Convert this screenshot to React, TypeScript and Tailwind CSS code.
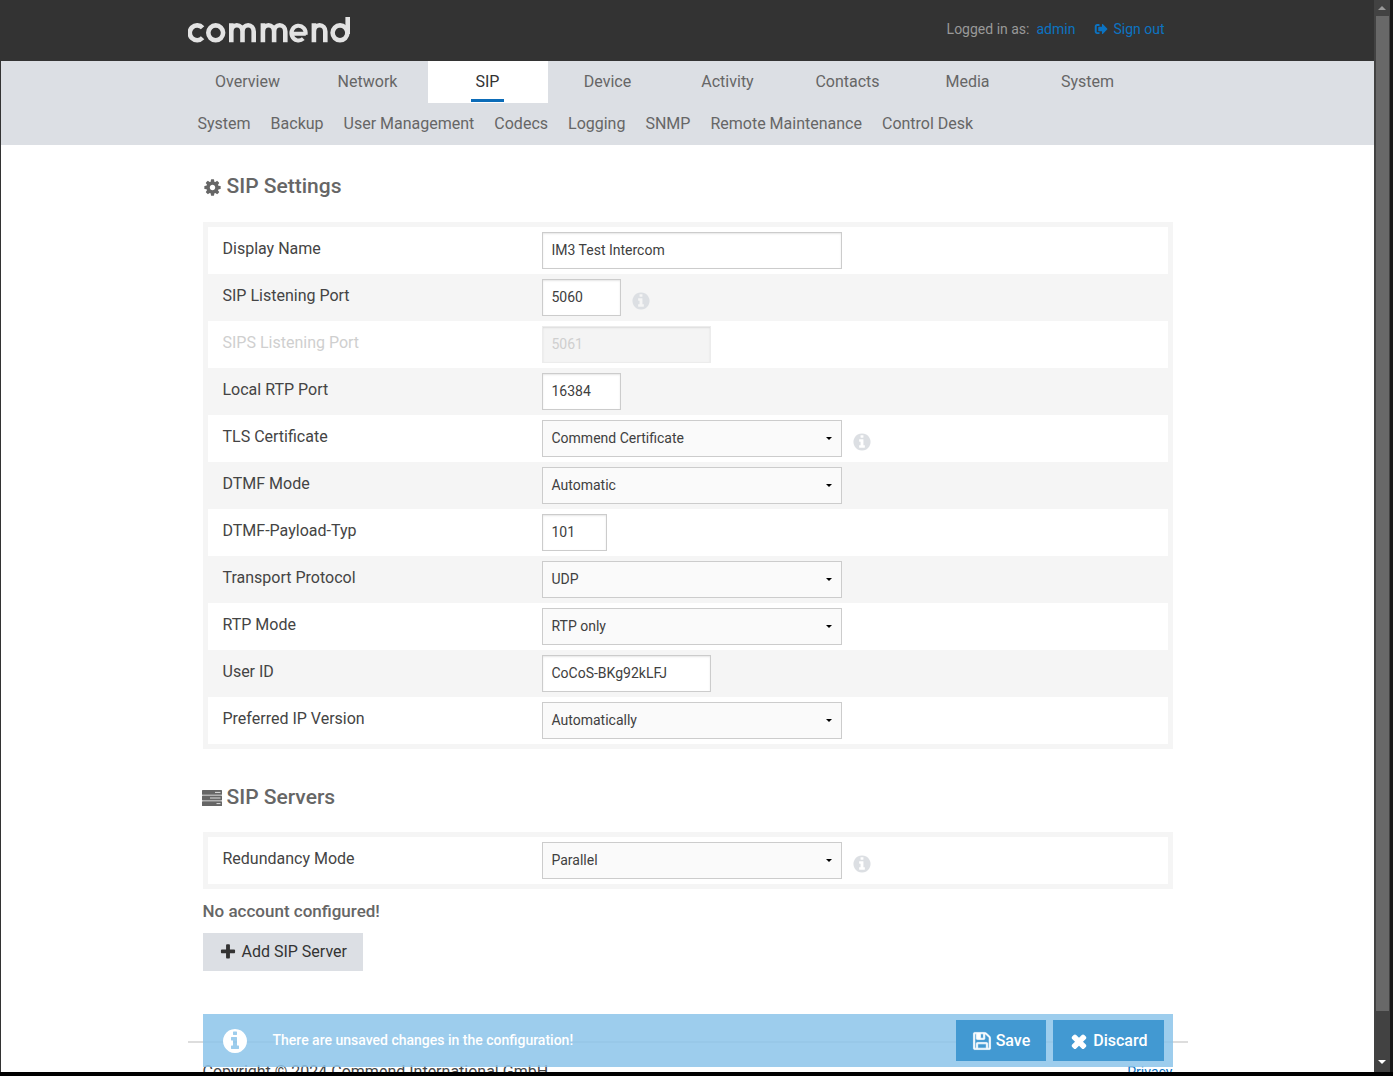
import React, { useState } from 'react';
import clsx from 'clsx';

const ICONS = {
  cog: 'M1152 896q0-106-75-181t-181-75-181 75-75 181 75 181 181 75 181-75 75-181zm512-109v222q0 12-8 23t-20 13l-185 28q-19 54-39 91 35 50 107 138 10 12 10 25t-9 23q-27 37-99 108t-94 71q-12 0-26-9l-138-108q-44 23-91 38-16 136-29 186-7 28-36 28h-222q-14 0-24.5-8.5t-11.5-21.5l-28-184q-49-16-90-37l-141 107q-10 9-25 9-14 0-25-11-126-114-165-168-7-10-7-23 0-12 8-23 15-21 51-66.5t54-70.5q-27-50-41-99l-183-27q-13-2-21-12.5t-8-23.5v-222q0-12 8-23t19-13l186-28q14-46 39-92-40-57-107-138-10-12-10-24 0-10 9-23 26-36 98.5-107.5t94.5-71.5q13 0 26 10l138 107q44-23 91-38 16-136 29-186 7-28 36-28h222q14 0 24.5 8.5t11.5 21.5l28 184q49 16 90 37l142-107q9-9 24-9 13 0 25 10 129 119 165 170 7 8 7 22 0 12-8 23-15 21-51 66.5t-54 70.5q26 50 41 98l183 28q13 2 21 12.5t8 23.5z',
  info: 'M1152 1376v-160q0-14-9-23t-23-9h-96v-512q0-14-9-23t-23-9h-320q-14 0-23 9t-9 23v160q0 14 9 23t23 9h96v320h-96q-14 0-23 9t-9 23v160q0 14 9 23t23 9h448q14 0 23-9t9-23zm-128-896v-160q0-14-9-23t-23-9h-192q-14 0-23 9t-9 23v160q0 14 9 23t23 9h192q14 0 23-9t9-23zm640 416q0 209-103 385.5t-279.5 279.5-385.5 103-385.5-103-279.5-279.5-103-385.5 103-385.5 279.5-279.5 385.5-103 385.5 103 279.5 279.5 103 385.5z',
  plus: 'M1600 736v192q0 40-28 68t-68 28h-416v416q0 40-28 68t-68 28h-192q-40 0-68-28t-28-68v-416h-416q-40 0-68-28t-28-68v-192q0-40 28-68t68-28h416v-416q0-40 28-68t68-28h192q40 0 68 28t28 68v416h416q40 0 68 28t28 68z',
  times: 'M1490 1322q0 40-28 68l-136 136q-28 28-68 28t-68-28l-294-294-294 294q-28 28-68 28t-68-28l-136-136q-28-28-28-68t28-68l294-294-294-294q-28-28-28-68t28-68l136-136q28-28 68-28t68 28l294 294 294-294q28-28 68-28t68 28l136 136q28 28 28 68t-28 68l-294 294 294 294q28 28 28 68z',
  save: 'M512 1536h768v-384h-768v384zm896 0h128v-896q0-14-10-38.5t-20-34.5l-281-281q-10-10-34-20t-39-10v416q0 40-28 68t-68 28h-576q-40 0-68-28t-28-68v-416h-128v1280h128v-416q0-40 28-68t68-28h832q40 0 68 28t28 68v416zm-384-928v-320q0-13-9.5-22.5t-22.5-9.5h-192q-13 0-22.5 9.5t-9.5 22.5v320q0 13 9.5 22.5t22.5 9.5h192q13 0 22.5-9.5t9.5-22.5zm640 32v928q0 40-28 68t-68 28h-1344q-40 0-68-28t-28-68v-1344q0-40 28-68t68-28h928q40 0 88 20t76 48l280 280q28 28 48 76t20 88z',
  signOut: 'M704 1536h-320q-119 0-203.5-84.5t-84.5-203.5v-704q0-119 84.5-203.5t203.5-84.5h320v240h-300q-56 0-56 56v688q0 56 56 56h300zm1024-640q0 26-19 45l-584 584q-19 19-45 19t-45-19-19-45v-308h-408q-26 0-45-19t-19-45v-424q0-26 19-45t45-19h408v-308q0-26 19-45t45-19 45 19l584 584q19 19 19 45z',
};

function Icon({ name, className }: { name: keyof typeof ICONS; className?: string }) {
  return (
    <svg viewBox="0 0 1792 1792" fill="currentColor" stroke="currentColor" aria-hidden="true" className={clsx('shrink-0', className)}>
      <path d={ICONS[name]} />
    </svg>
  );
}

function ServerIcon() {
  return (
    <svg viewBox="0 0 20 16" fill="currentColor" aria-hidden="true" className="-ml-px h-4 w-5 shrink-0">
      <rect width="20" height="4.8" rx="0.6" />
      <rect y="5.6" width="20" height="4.8" rx="0.6" />
      <rect y="11.2" width="20" height="4.8" rx="0.6" />
      <path d="M13 2.4h5.500M8 8h10.500M14.500 13.600h4" stroke="white" strokeWidth="0.8" />
    </svg>
  );
}

// Wordmark in stroked shapes
function Logo() {
  return (
    <svg viewBox="0 0 162 27" fill="none" stroke="#e3e3e3" strokeWidth="4.6" className="h-[27px] w-[162px]" role="img" aria-label="commend">
      <path d="M14.6 10.8a7.4 7.4 0 1 0 0 10" />
      <circle cx="27.700" cy="15.800" r="7.400" />
      <path d="M43.300 25.300V6.300M43.300 14.500a5.600 6.300 0 0 1 11.200 0V25.300M54.500 14.500a5.600 6.300 0 0 1 11.200 0V25.300" />
      <path d="M74.900 25.300V6.300M74.900 14.500a5.600 6.300 0 0 1 11.200 0V25.300M86.100 14.500a5.600 6.300 0 0 1 11.200 0V25.300" />
      <path d="M105 16.800h12.800M117.500 17.600a7.100 7.400 0 1 0-2.200 4" strokeWidth="4" />
      <path d="M125.900 25.300V6.300M125.900 14.500a5.700 6.300 0 0 1 11.400 0V25.300" />
      <circle cx="152" cy="15.800" r="7.400" />
      <path d="M159.700 0v17" />
    </svg>
  );
}

interface Field {
  id: string;
  label: string;
  value: string;
  kind: 'text' | 'select';
  width: string;
  info?: boolean;
  disabled?: boolean;
}

const settings: Field[] = [
  { id: 'display-name', label: 'Display Name', value: 'IM3 Test Intercom', kind: 'text', width: 'w-[300px]' },
  { id: 'sip-port', label: 'SIP Listening Port', value: '5060', kind: 'text', width: 'w-[79px]', info: true },
  { id: 'sips-port', label: 'SIPS Listening Port', value: '5061', kind: 'text', width: 'w-[169px]', disabled: true },
  { id: 'rtp-port', label: 'Local RTP Port', value: '16384', kind: 'text', width: 'w-[79px]' },
  { id: 'tls-cert', label: 'TLS Certificate', value: 'Commend Certificate', kind: 'select', width: 'w-[300px]', info: true },
  { id: 'dtmf-mode', label: 'DTMF Mode', value: 'Automatic', kind: 'select', width: 'w-[300px]' },
  { id: 'dtmf-payload', label: 'DTMF-Payload-Typ', value: '101', kind: 'text', width: 'w-[65px]' },
  { id: 'transport', label: 'Transport Protocol', value: 'UDP', kind: 'select', width: 'w-[300px]' },
  { id: 'rtp-mode', label: 'RTP Mode', value: 'RTP only', kind: 'select', width: 'w-[300px]' },
  { id: 'user-id', label: 'User ID', value: 'CoCoS-BKg92kLFJ', kind: 'text', width: 'w-[169px]' },
  { id: 'ip-version', label: 'Preferred IP Version', value: 'Automatically', kind: 'select', width: 'w-[300px]' },
];

const servers: Field[] = [
  { id: 'redundancy', label: 'Redundancy Mode', value: 'Parallel', kind: 'select', width: 'w-[300px]', info: true },
];

const mainNav = ['Overview', 'Network', 'SIP', 'Device', 'Activity', 'Contacts', 'Media', 'System'];
const subNav = ['System', 'Backup', 'User Management', 'Codecs', 'Logging', 'SNMP', 'Remote Maintenance', 'Control Desk'];

function FieldRow({ field }: { field: Field }) {
  const [value, setValue] = useState(field.value);

  return (
    <div className="flex h-[47px] even:bg-[#f5f5f5]">
      <label
        htmlFor={field.id}
        className={clsx('w-1/3 pt-[10px] pl-[15px] leading-6', field.disabled ? 'text-[#cfcfcf]' : 'text-[#444]')}
      >
        {field.label}
      </label>
      <div className="flex flex-1 items-center pl-[15px] text-sm">
        {field.kind === 'text' ? (
          <input
            id={field.id}
            type="text"
            value={value}
            disabled={field.disabled}
            onChange={(e) => setValue(e.target.value)}
            className={clsx(
              'h-[37px] border px-2 pb-[2px] shadow-[inset_0_1px_2px_rgba(0,0,0,0.1)] outline-none',
              field.width,
              field.disabled ? 'border-[#ececec] bg-[#f4f4f4] text-[#cfcfcf]' : 'border-[#ccc] bg-white text-[#404040]',
            )}
          />
        ) : (
          <div className="relative">
            <select
              id={field.id}
              value={value}
              onChange={(e) => setValue(e.target.value)}
              className={clsx('h-[37px] appearance-none border border-[#ccc] bg-[#fafafa] px-2 pb-[2px] text-[#404040] outline-none', field.width)}
            >
              <option>{field.value}</option>
            </select>
            <svg viewBox="0 0 6 3" className="pointer-events-none absolute top-[17px] right-[10px] h-[3px] w-[6px]" aria-hidden="true">
              <path d="M0 0h6L3 3z" />
            </svg>
          </div>
        )}
        {field.info && <Icon name="info" className="mt-[6px] ml-[10px] size-5 text-[#dcdfe3]" />}
      </div>
    </div>
  );
}

function Panel({ fields }: { fields: Field[] }) {
  return (
    <div className="border-5 border-[#f5f5f5]">
      {fields.map((field) => (
        <FieldRow key={field.id} field={field} />
      ))}
    </div>
  );
}

export default function App() {
  return (
    <div className="flex h-screen flex-col bg-black font-[Roboto,sans-serif] text-base text-[#666]">
      <div className="flex min-h-0 flex-1 border-l border-[#333]">
        <div className="relative min-w-0 flex-1 overflow-hidden bg-white">
          <header className="bg-[#333]">
            <div className="mx-auto flex h-[61px] max-w-[1000px] items-center justify-between pr-[23px]">
              <Logo />
              <div className="flex items-center pb-[3px] text-sm text-[#999]">
                <span>Logged in as:</span>
                <a href="#admin" className="ml-[7px] text-[#0c73c2]">admin</a>
                <a href="#logout" className="ml-[19px] flex items-center gap-[5px] text-[#0c73c2]">
                  <Icon name="signOut" className="size-[14px]" />
                  Sign out
                </a>
              </div>
            </div>
          </header>

          <nav className="bg-[#dcdfe4]">
            <div className="mx-auto max-w-[1000px]">
              <ul className="flex">
                {mainNav.map((item) => (
                  <li key={item} className={clsx('h-[42px] w-[120px] text-center', item === 'SIP' && 'bg-white text-[#333]')}>
                    <a
                      href="#main"
                      className={clsx('inline-block h-[41px] pt-[9px] leading-6', item === 'SIP' && 'border-b-3 border-[#0c6cb8] px-[5px]')}
                    >
                      {item}
                    </a>
                  </li>
                ))}
              </ul>
              <ul className="flex gap-5 pl-[10px]">
                {subNav.map((item) => (
                  <li key={item}>
                    <a href="#sub" className="block h-[42px] pt-[9px] leading-6">{item}</a>
                  </li>
                ))}
              </ul>
            </div>
          </nav>

          <main className="mx-auto max-w-[1000px] px-[15px] pt-[28px]">
            <h2 className="flex h-[28px] items-center gap-[5px] text-[21px] font-medium">
              <Icon name="cog" className="size-[19px]" />
              SIP Settings
            </h2>
            <div className="mt-[21px]">
              <Panel fields={settings} />
            </div>

            <h2 className="mt-[35px] flex h-[28px] items-center gap-[5px] text-[21px] font-medium">
              <ServerIcon />
              SIP Servers
            </h2>
            <div className="mt-[20px]">
              <Panel fields={servers} />
            </div>

            <p className="mt-[10px] text-[17px] leading-6 font-medium">No account configured!</p>
            <button type="button" className="mt-[10px] flex h-[38px] items-center gap-[5px] bg-[#dcdfe4] px-4 text-[#333]">
              <Icon name="plus" className="size-[18px]" />
              Add SIP Server
            </button>
          </main>

          <footer className="mx-auto mt-[70px] max-w-[1000px] border-t-2 border-[#ddd] px-[15px]">
            <div className="flex justify-between pt-[17px] leading-6 text-[#444]">
              <span>Copyright © 2024 Commend International GmbH</span>
              <a href="#privacy" className="text-sm leading-6 text-[#0c73c2]">Privacy</a>
            </div>
          </footer>

          <div className="absolute inset-x-0 bottom-[5px] mx-auto max-w-[970px]">
            <div className="flex h-[53px] items-center bg-[#8cc4ea]/85 pr-[9px] pl-[18px] text-white" role="status">
              <Icon name="info" className="size-7" />
              <span className="ml-6 pb-[2px] text-sm font-medium">There are unsaved changes in the configuration!</span>
              <div className="ml-auto flex gap-[7px] font-medium">
                <button type="button" className="flex h-[41px] items-center gap-1 bg-[#4299d2] px-4">
                  <Icon name="save" className="size-5 stroke-[60px]" />
                  Save
                </button>
                <button type="button" className="flex h-[41px] items-center gap-1 bg-[#4299d2] px-4">
                  <Icon name="times" className="size-5 stroke-[120px]" />
                  Discard
                </button>
              </div>
            </div>
          </div>
        </div>

        {/* Scrollbar */}
        <div className="flex w-4 flex-col items-center bg-[#424242]" aria-hidden="true">
          <svg viewBox="0 0 16 16" className="h-4 w-4">
            <path d="M4 10h8L8 6z" fill="#999" />
          </svg>
          <div className="w-[13px] flex-1 bg-[#686868]" />
          <svg viewBox="0 0 16 61" className="h-[61px] w-4">
            <path d="M4 49h8l-4 4z" fill="#fff" />
          </svg>
        </div>
        <div className="w-[3px] bg-[#1a1a1a]" />
      </div>
      <div className="h-1" />
    </div>
  );
}
